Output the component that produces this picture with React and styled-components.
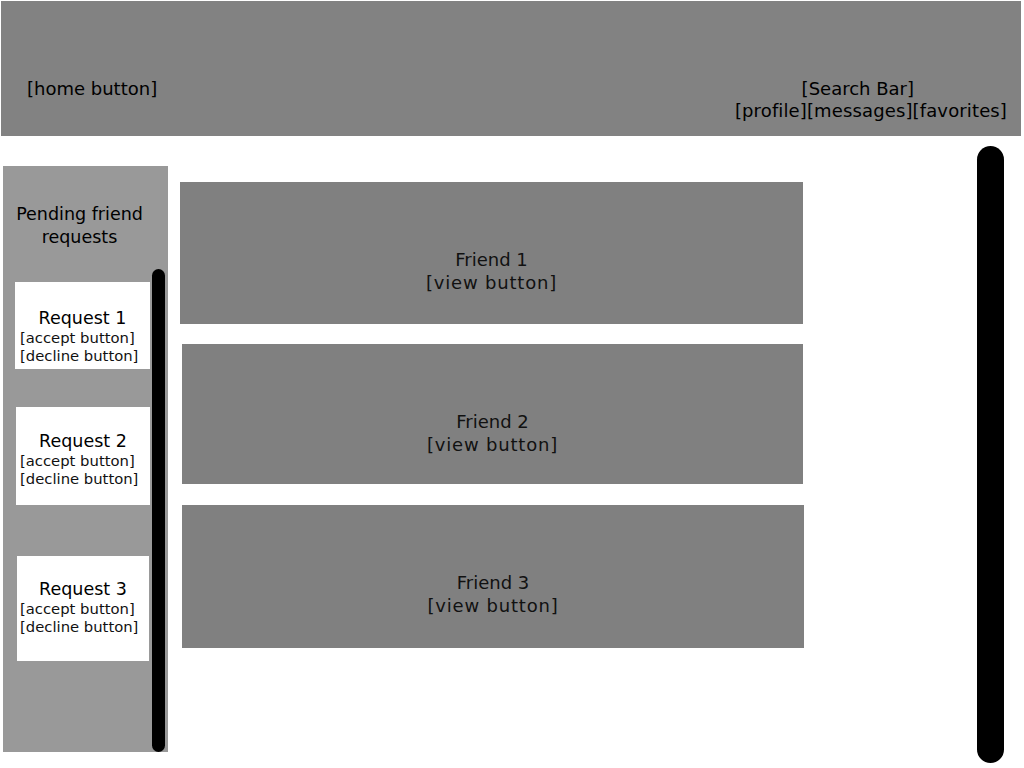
import React from "react";
import styled, { createGlobalStyle } from "styled-components";

const Global = createGlobalStyle`
  html, body { margin: 0; padding: 0; background: #ffffff; }
  body { font-family: "DejaVu Sans", Verdana, sans-serif; color: #000; }
  * { box-sizing: border-box; }
`;

const Page = styled.div`
  width: 1024px;
  height: 768px;
  overflow: hidden;
  padding-top: 1px;
  background: #ffffff;
`;

const Header = styled.header`
  margin: 0 3px 0 1px;
  height: 135px;
  background: #828282;
  display: flex;
  justify-content: space-between;
  align-items: flex-start;
  padding: 77px 14px 0 26px;
  font-size: 18px;
  line-height: 22px;
  color: #000;
`;

const HomeButton = styled.div`
  white-space: nowrap;
`;

const NavColumn = styled.div`
  display: flex;
  flex-direction: column;
  align-items: flex-end;
`;

const NavLine = styled.div`
  white-space: nowrap;
  margin-right: ${(p) => p.$inset || 0}px;
  letter-spacing: ${(p) => p.$spacing || 0}px;
`;

const Main = styled.main`
  display: flex;
  align-items: flex-start;
  margin-top: 10px;
`;

const Sidebar = styled.aside`
  margin: 20px 0 0 3px;
  width: 165px;
  height: 586px;
  background: #999999;
  display: flex;
`;

const SidebarContent = styled.div`
  flex: 1;
  display: flex;
  flex-direction: column;
  padding-top: 37px;
`;

const SidebarTitle = styled.h2`
  margin: 0;
  padding-left: 4px;
  font-weight: normal;
  font-size: 17.5px;
  line-height: 23px;
  text-align: center;
`;

const ScrollThumb = styled.div`
  width: ${(p) => p.$w}px;
  border-radius: ${(p) => p.$w / 2}px;
  background: #000;
  flex-shrink: 0;
`;

const SideThumb = styled(ScrollThumb)`
  margin: 103px 3px 0 0;
  align-self: stretch;
`;

const RequestCard = styled.div`
  background: #ffffff;
  margin-left: ${(p) => p.$offset}px;
  margin-top: ${(p) => p.$gap}px;
  width: ${(p) => p.$width}px;
  height: ${(p) => p.$height}px;
  padding-top: ${(p) => p.$pad}px;
  display: flex;
  flex-direction: column;
`;

const RequestTitle = styled.div`
  font-size: 17.5px;
  line-height: 20px;
  margin-bottom: 1px;
  text-align: center;
`;

const RequestAction = styled.div`
  font-size: 14.8px;
  line-height: 18px;
  padding-left: ${(p) => p.$indent}px;
  white-space: nowrap;
  color: #111;
`;

const FriendsColumn = styled.section`
  margin-top: 36px;
  display: flex;
  flex-direction: column;
`;

const FriendCard = styled.div`
  background: #808080;
  margin-left: ${(p) => p.$offset}px;
  margin-top: ${(p) => p.$gap}px;
  width: ${(p) => p.$width}px;
  height: ${(p) => p.$height}px;
  padding-top: 66px;
  text-align: center;
  font-size: 18px;
  line-height: 23px;
  color: #111;
`;

const FriendLine = styled.div`
  white-space: nowrap;
  letter-spacing: ${(p) => p.$spacing || 0}px;
`;

const PageThumb = styled(ScrollThumb)`
  margin-left: auto;
  margin-right: 20px;
  height: 617px;
`;

const requests = [
  { n: 1, offset: 12, gap: 33, width: 135, height: 87, pad: 26 },
  { n: 2, offset: 13, gap: 38, width: 134, height: 98, pad: 24 },
  { n: 3, offset: 14, gap: 51, width: 132, height: 105, pad: 23 },
];

const friends = [
  { n: 1, offset: 12, gap: 0, width: 623, height: 142 },
  { n: 2, offset: 14, gap: 20, width: 621, height: 140 },
  { n: 3, offset: 14, gap: 21, width: 622, height: 143 },
];

export default function App() {
  return (
    <Page>
      <Global />
      <Header>
        <HomeButton>[home button]</HomeButton>
        <NavColumn>
          <NavLine $inset={93}>[Search Bar]</NavLine>
          <NavLine $spacing={0.13}>[profile][messages][favorites]</NavLine>
        </NavColumn>
      </Header>
      <Main>
        <Sidebar>
          <SidebarContent>
            <SidebarTitle>
              Pending friend
              <br />
              requests
            </SidebarTitle>
            {requests.map((r) => (
              <RequestCard
                key={r.n}
                $offset={r.offset}
                $gap={r.gap}
                $width={r.width}
                $height={r.height}
                $pad={r.pad}
              >
                <RequestTitle>Request {r.n}</RequestTitle>
                <RequestAction $indent={17 - r.offset}>[accept button]</RequestAction>
                <RequestAction $indent={17 - r.offset}>[decline button]</RequestAction>
              </RequestCard>
            ))}
          </SidebarContent>
          <SideThumb $w={13} />
        </Sidebar>
        <FriendsColumn>
          {friends.map((f) => (
            <FriendCard
              key={f.n}
              $offset={f.offset}
              $gap={f.gap}
              $width={f.width}
              $height={f.height}
            >
              <FriendLine>Friend {f.n}</FriendLine>
              <FriendLine $spacing={0.8}>[view button]</FriendLine>
            </FriendCard>
          ))}
        </FriendsColumn>
        <PageThumb $w={27} />
      </Main>
    </Page>
  );
}
